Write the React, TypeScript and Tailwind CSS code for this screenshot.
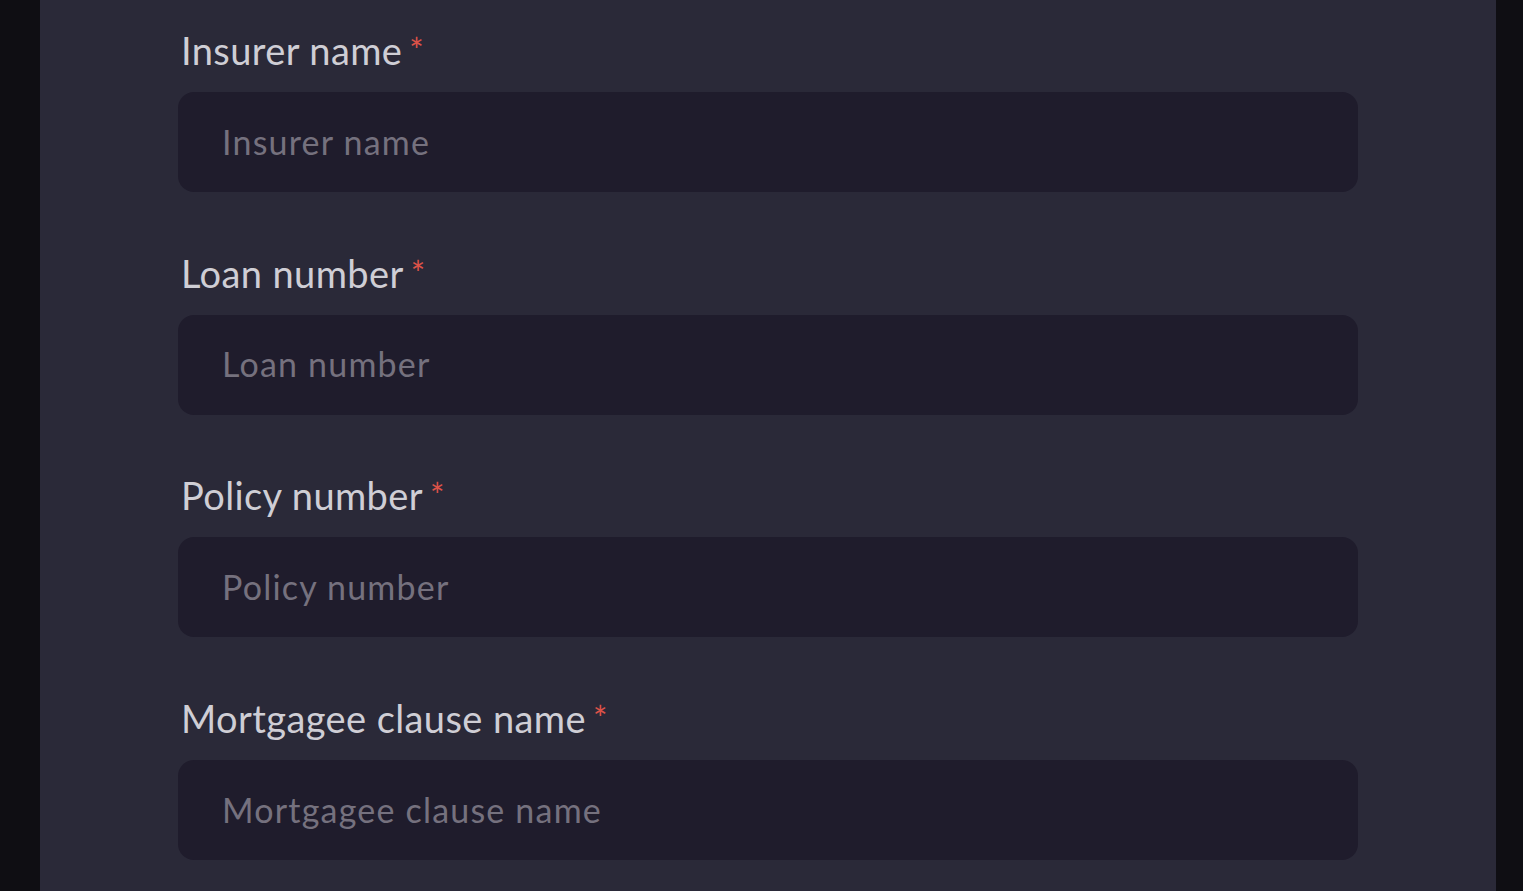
import React from 'react';

const fields = ['Insurer name', 'Loan number', 'Policy number', 'Mortgagee clause name'];

export default function App() {
    return (
        <div className="min-h-screen h-[891px] overflow-hidden bg-[#0f0e13] flex" style={{ fontFamily: 'Lato, "Open Sans", sans-serif' }}>
            <div className="ml-[40px] w-[1456px] h-full bg-[#2a2938] pl-[138px] pt-[28px]">
                <div className="flex flex-col gap-[58.7px] w-[1180px]">
                    {fields.map((f) => (
                        <div key={f} className="flex flex-col">
                            <label className="flex items-start h-[45px] mb-[19px] pl-[3px] text-[38px] leading-[45px] text-[#cfced5] tracking-[0.4px]">
                                {f}
                                <span className="ml-[7px] text-[34px] leading-[34px] mt-[5px] text-[#dc5248]">*</span>
                            </label>
                            <input
                                placeholder={f}
                                className="h-[100px] w-full rounded-[16px] bg-[#1f1c2c] px-[44px] pb-[2px] text-[34px] text-[#cfced5] placeholder:text-[#75717e] outline-none tracking-[1.2px]"
                            />
                        </div>
                    ))}
                </div>
            </div>
        </div>
    );
}
